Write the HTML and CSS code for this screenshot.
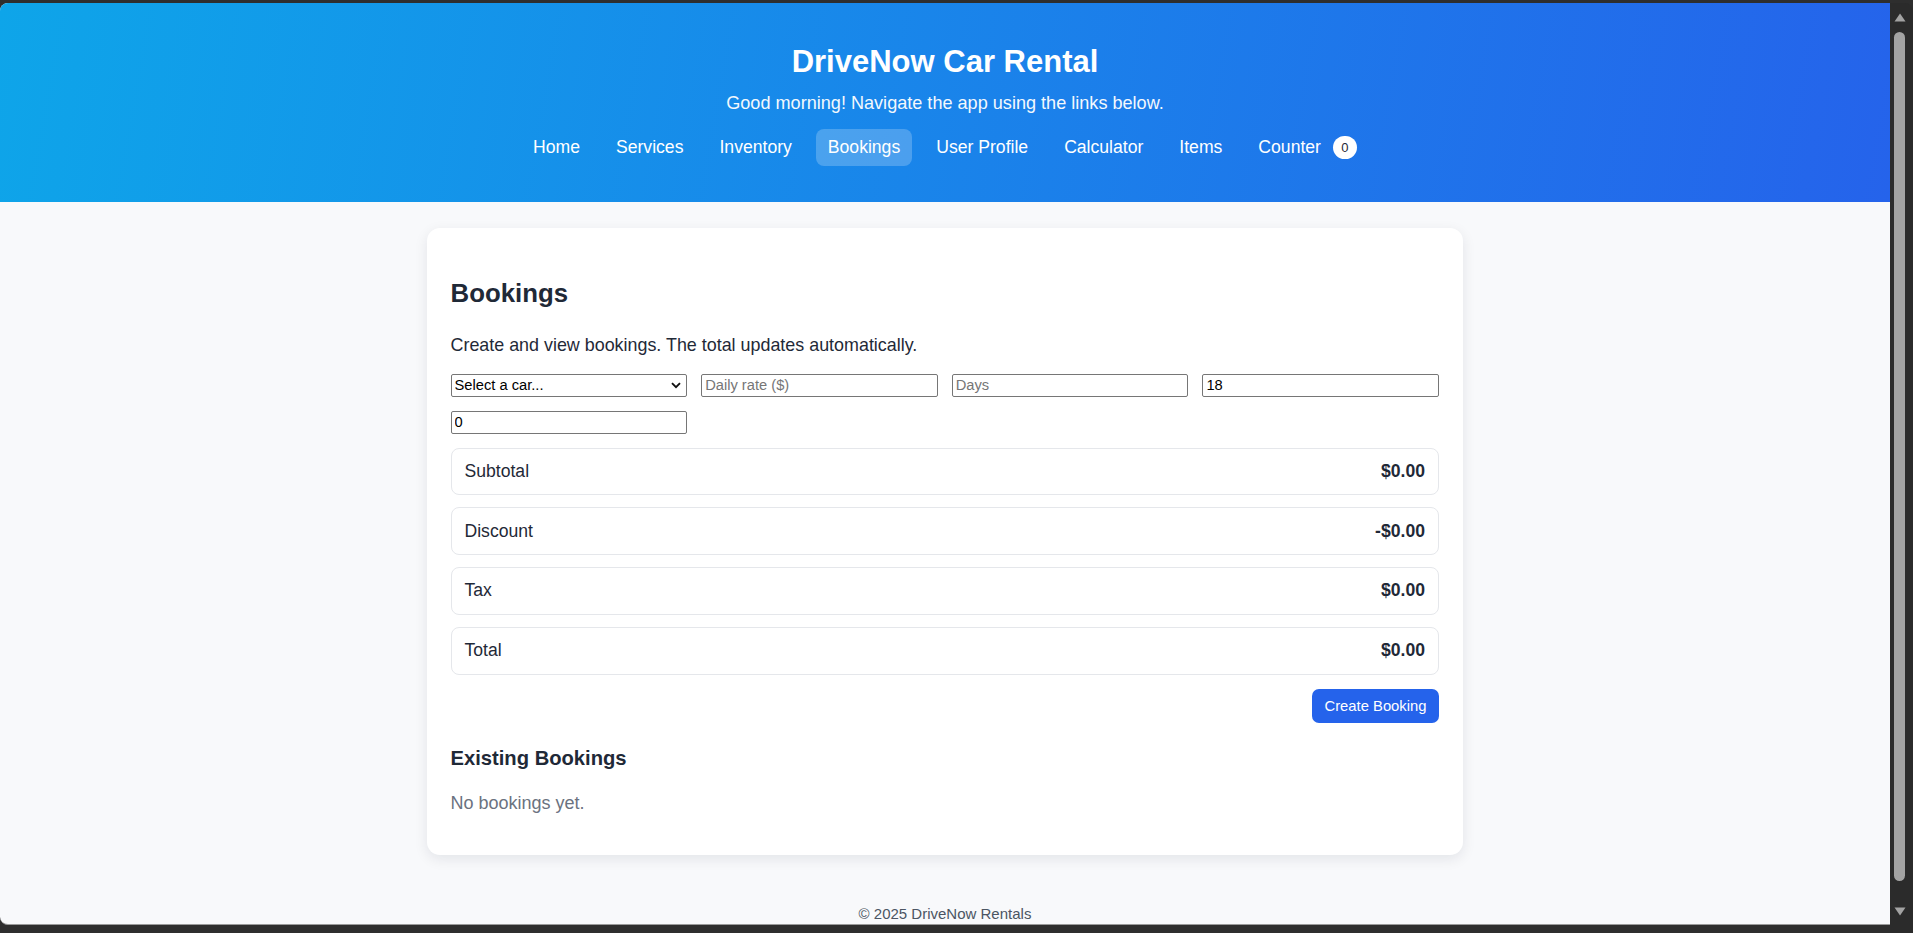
FILE: index.html
```html
<!DOCTYPE html>
<html lang="en">
<head>
<meta charset="utf-8">
<title>DriveNow Car Rental</title>
<link rel="stylesheet" href="styles.css">
</head>
<body>
<div class="frame">
  <div class="viewport">
    <header class="hero">
      <h1 class="hero-title">DriveNow Car Rental</h1>
      <p class="hero-sub">Good morning! Navigate the app using the links below.</p>
      <nav class="nav">
        <a class="nav-link" href="#">Home</a>
        <a class="nav-link" href="#">Services</a>
        <a class="nav-link" href="#">Inventory</a>
        <a class="nav-link active" href="#">Bookings</a>
        <a class="nav-link" href="#">User Profile</a>
        <a class="nav-link" href="#">Calculator</a>
        <a class="nav-link" href="#">Items</a>
        <a class="nav-link" href="#">Counter<span class="badge">0</span></a>
      </nav>
    </header>
    <main class="main">
      <section class="card">
        <h2 class="card-title">Bookings</h2>
        <p class="lead">Create and view bookings. The total updates automatically.</p>
        <div class="form-grid">
          <div class="select-wrap">
            <select class="field select-field"><option>Select a car...</option></select>
            <svg class="chevron" width="10" height="7" viewBox="0 0 10 7"><path d="M1 1.2 L5 5.2 L9 1.2" fill="none" stroke="#111" stroke-width="1.9"/></svg>
          </div>
          <input class="field" type="text" placeholder="Daily rate ($)">
          <input class="field" type="text" placeholder="Days">
          <input class="field" type="text" value="18">
          <input class="field" type="text" value="0">
        </div>
        <div class="summary">
          <div class="sum-row"><span>Subtotal</span><strong>$0.00</strong></div>
          <div class="sum-row"><span>Discount</span><strong>-$0.00</strong></div>
          <div class="sum-row"><span>Tax</span><strong>$0.00</strong></div>
          <div class="sum-row"><span>Total</span><strong>$0.00</strong></div>
        </div>
        <div class="actions"><button class="btn" type="button">Create Booking</button></div>
        <h3 class="sub-title">Existing Bookings</h3>
        <p class="empty">No bookings yet.</p>
      </section>
    </main>
    <footer class="footer">© 2025 DriveNow Rentals</footer>
  </div>
  <div class="scrollbar">
    <svg class="arrow" width="12" height="9" viewBox="0 0 12 9"><path d="M6 0.5 L11.5 8.5 L0.5 8.5 Z" fill="#a3a3a3"/></svg>
    <div class="thumb"></div>
    <svg class="arrow" width="12" height="9" viewBox="0 0 12 9"><path d="M0.5 0.5 L11.5 0.5 L6 8.5 Z" fill="#a3a3a3"/></svg>
  </div>
</div>
</body>
</html>
```

FILE: styles.css
```css
* { box-sizing: border-box; }

html, body {
  margin: 0;
  height: 933px;
  overflow: hidden;
}

body {
  background: #2e2e2e;
  font-family: "Liberation Sans", Arial, sans-serif;
  color: #1f2937;
}

.frame {
  display: flex;
  padding-top: 3px;
  height: 933px;
}

.viewport {
  width: 1890px;
  height: 922px;
  overflow: hidden;
  background: #f8f9fb;
  border-top-left-radius: 8px;
  border-bottom-left-radius: 8px;
  border-bottom: 1px solid #9a9a9a;
  display: flex;
  flex-direction: column;
}

.hero {
  background: linear-gradient(100deg, #0ea5e9 0%, #2563eb 100%);
  color: #ffffff;
  text-align: center;
  padding: 40px 0 36px;
  flex: none;
}

.hero-title {
  margin: 0;
  font-size: 31px;
  line-height: 37.2px;
  font-weight: 700;
}

.hero-sub {
  margin: 10px 0 0;
  font-size: 18.1px;
  line-height: 26.4px;
  opacity: 0.95;
}

.nav {
  margin-top: 12px;
  display: flex;
  justify-content: center;
  gap: 12px;
}

.nav-link {
  display: flex;
  align-items: center;
  height: 37px;
  color: #ffffff;
  text-decoration: none;
  font-size: 17.6px;
  line-height: 21px;
  padding: 0 12px;
  border-radius: 8px;
}

.nav-link.active {
  background: rgba(255, 255, 255, 0.22);
}

.badge {
  display: inline-block;
  margin-left: 12px;
  min-width: 24px;
  height: 23px;
  line-height: 23px;
  border-radius: 12px;
  background: #ffffff;
  color: #1f2937;
  font-size: 13px;
  text-align: center;
}

.main {
  padding: 26px 0 24px;
  flex: none;
}

.card {
  width: 1036px;
  margin: 0 auto;
  background: #ffffff;
  border-radius: 13px;
  box-shadow: 0 4px 14px rgba(15, 23, 42, 0.09);
  padding: 22px 24px 38.6px 23.5px;
}

.card-title {
  margin: 28px 0 22.7px;
  font-size: 25.8px;
  line-height: 31.2px;
  font-weight: 700;
}

.lead {
  margin: 0 0 15.7px;
  font-size: 17.9px;
  line-height: 26.4px;
}

.form-grid {
  display: grid;
  grid-template-columns: repeat(4, 1fr);
  gap: 14px;
}

.field {
  height: 23px;
  font: 14.7px "Liberation Sans", Arial, sans-serif;
  color: #000000;
  border: 1px solid #767676;
  border-radius: 2px;
  padding: 1px 3px;
  background: #ffffff;
  width: 100%;
  margin: 0;
}

.field::placeholder {
  color: #767676;
}

.select-wrap {
  position: relative;
}

.select-field {
  appearance: none;
  -webkit-appearance: none;
  display: block;
  padding: 0 24px 0 3px;
  line-height: 21px;
}

.chevron {
  position: absolute;
  right: 6px;
  top: 8px;
  pointer-events: none;
}

.summary {
  margin-top: 14px;
  display: flex;
  flex-direction: column;
  gap: 12.2px;
}

.sum-row {
  height: 47.6px;
  display: flex;
  justify-content: space-between;
  align-items: center;
  border: 1px solid #e5e7eb;
  border-radius: 8px;
  padding: 0 13px;
  font-size: 17.6px;
}

.sum-row strong {
  font-weight: 700;
}

.actions {
  margin-top: 14px;
  display: flex;
  justify-content: flex-end;
}

.btn {
  height: 34.4px;
  padding: 0 12.5px;
  border: none;
  border-radius: 7px;
  background: #2563eb;
  color: #ffffff;
  font-family: "Liberation Sans", Arial, sans-serif;
  font-size: 14.8px;
}

.sub-title {
  margin: 22.7px 0 20.4px;
  font-size: 20.2px;
  line-height: 24.2px;
  font-weight: 700;
}

.empty {
  margin: 0;
  font-size: 18px;
  line-height: 26.4px;
  color: #6b7280;
}

.footer {
  padding-top: 23.7px;
  text-align: center;
  font-size: 15px;
  line-height: 22.5px;
  color: #4b5563;
}

.scrollbar {
  width: 23px;
  height: 930px;
  background: #2b2b2b;
  border-top-right-radius: 8px;
  display: flex;
  flex-direction: column;
  align-items: flex-start;
  padding: 10px 0 0 3.5px;
}

.arrow {
  display: block;
  flex: none;
}

.thumb {
  width: 11px;
  height: 849px;
  margin: 10px 0 26px 0.5px;
  border-radius: 6px;
  background: #a3a3a3;
  flex: none;
}
```
